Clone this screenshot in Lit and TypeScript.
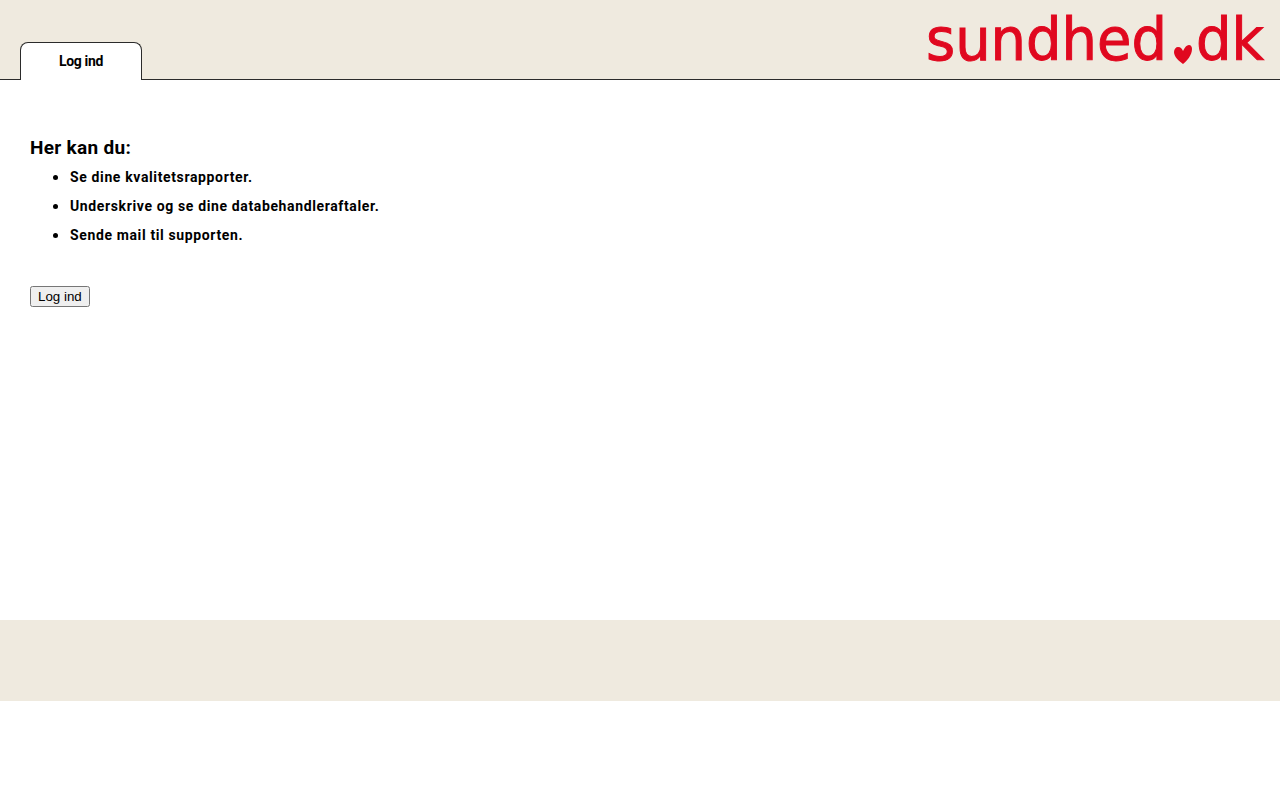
import { LitElement, css, html } from 'lit';
import { customElement } from 'lit/decorators.js';

@customElement('app-root')
export class AppRoot extends LitElement {
  static styles = css`
    :host {
      display: block;
      font-family: 'Roboto', 'Liberation Sans', sans-serif;
      color: #000000;
      background: #ffffff;
    }

    .header {
      height: 79px;
      background: #efeadf;
      border-bottom: 1px solid #2b2b2b;
      display: flex;
      justify-content: space-between;
      align-items: flex-start;
      padding: 0 0 0 20px;
    }

    .tab {
      box-sizing: border-box;
      width: 122px;
      height: 38px;
      margin-top: 42px;
      background: #ffffff;
      border: 1px solid #2b2b2b;
      border-bottom: none;
      border-radius: 8px 8px 0 0;
      display: flex;
      justify-content: center;
      padding-top: 10px;
      font-size: 14px;
      line-height: 17px;
      font-weight: 700;
      letter-spacing: -0.35px;
    }

    .logo {
      display: block;
    }

    .logo text {
      font-family: 'DejaVu Sans', sans-serif;
      font-size: 59px;
      fill: #e0081f;
      stroke: #e0081f;
      stroke-width: 1px;
    }

    .logo path {
      fill: #e0081f;
    }

    .main {
      box-sizing: border-box;
      height: 540px;
      padding: 56px 30px 0;
    }

    h1 {
      margin: 0;
      font-size: 19px;
      line-height: 23px;
      font-weight: 700;
      letter-spacing: 0.3px;
    }

    ul {
      margin: 3px 0 0;
      padding: 0 0 0 40px;
    }

    li {
      height: 29px;
      font-size: 14px;
      line-height: 29px;
      font-weight: 700;
      letter-spacing: 0.63px;
    }

    li::marker {
      font-size: 17px;
    }

    .login {
      margin-top: 37px;
    }

    button {
      font-family: 'Liberation Sans', sans-serif;
      font-size: 13.33px;
    }

    .footer {
      height: 81px;
      background: #efeadf;
    }
  `;

  override render() {
    return html`
      <div class="header">
        <div class="tab">Log ind</div>
        <svg class="logo" width="360" height="79" viewBox="920 0 360 79" role="img" aria-label="sundhed.dk">
          <text x="926" y="60" textLength="241" lengthAdjust="spacingAndGlyphs">sundhed</text>
          <path d="M1183 64c-4-3-9-7-9-12 0-3 2-5 4-5 3 0 4 2 5 4 1-2 3-6 6-6 2 0 3 2 3 4 0 6-5 12-9 15z" />
          <text x="1196" y="60" textLength="68" lengthAdjust="spacingAndGlyphs">dk</text>
        </svg>
      </div>
      <div class="main">
        <h1>Her kan du:</h1>
        <ul>
          <li>Se dine kvalitetsrapporter.</li>
          <li>Underskrive og se dine databehandleraftaler.</li>
          <li>Sende mail til supporten.</li>
        </ul>
        <div class="login"><button type="button">Log ind</button></div>
      </div>
      <div class="footer"></div>
    `;
  }
}
